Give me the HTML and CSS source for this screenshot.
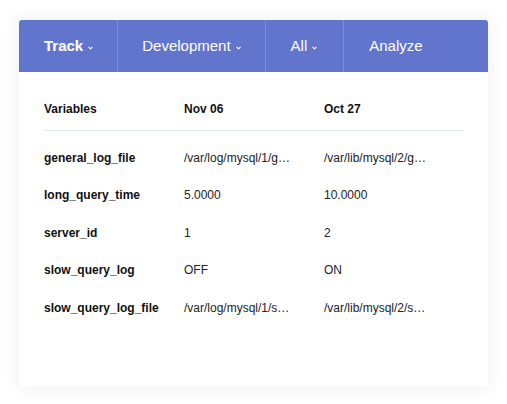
FILE: index.html
```html
<!DOCTYPE html>
<html>
<head>
<meta charset="utf-8">
<link rel="stylesheet" href="styles.css">
</head>
<body>
<div class="card">
  <nav class="nav">
    <div class="nav-item active">Track<svg class="chev" width="5" height="4" viewBox="0 0 5 4"><path d="M0.5 0.8 L2.5 2.8 L4.5 0.8" fill="none" stroke="#fff" stroke-width="1.1"/></svg></div>
    <div class="nav-item dev">Development<svg class="chev" width="5" height="4" viewBox="0 0 5 4"><path d="M0.5 0.8 L2.5 2.8 L4.5 0.8" fill="none" stroke="#fff" stroke-width="1.1"/></svg></div>
    <div class="nav-item all">All<svg class="chev" width="5" height="4" viewBox="0 0 5 4"><path d="M0.5 0.8 L2.5 2.8 L4.5 0.8" fill="none" stroke="#fff" stroke-width="1.1"/></svg></div>
    <div class="nav-item last">Analyze</div>
  </nav>
  <div class="content">
    <table class="vars">
      <thead>
        <tr><th>Variables</th><th>Nov 06</th><th>Oct 27</th></tr>
      </thead>
      <tbody>
        <tr class="first"><td class="name">general_log_file</td><td>/var/log/mysql/1/g…</td><td>/var/lib/mysql/2/g…</td></tr>
        <tr><td class="name">long_query_time</td><td>5.0000</td><td>10.0000</td></tr>
        <tr><td class="name">server_id</td><td>1</td><td>2</td></tr>
        <tr><td class="name">slow_query_log</td><td>OFF</td><td>ON</td></tr>
        <tr><td class="name">slow_query_log_file</td><td>/var/log/mysql/1/s…</td><td>/var/lib/mysql/2/s…</td></tr>
      </tbody>
    </table>
  </div>
</div>
</body>
</html>
```
FILE: styles.css
```css
html, body {
  margin: 0;
  background: #ffffff;
}
body {
  padding: 20px 19px 18px;
  font-family: "Liberation Sans", Arial, sans-serif;
}
.card {
  width: 469px;
  height: 366px;
  background: #ffffff;
  border-radius: 3px;
  box-shadow: 0 0 18px 3px rgba(0, 0, 0, 0.055);
  overflow: hidden;
}
.nav {
  display: flex;
  height: 52px;
  background: #6175cd;
  color: #ffffff;
}
.nav-item {
  display: flex;
  align-items: center;
  padding: 0 24px 2px 25px;
  font-size: 15px;
  border-right: 1px solid #7d8cd8;
}
.nav-item.active {
  font-weight: bold;
}
.nav-item.dev {
  padding-left: 24px;
}
.nav-item.all {
  padding-left: 25px;
  padding-right: 26px;
}
.nav-item.last {
  border-right: none;
}
.chev {
  margin-left: 5px;
  margin-top: 5px;
}
.content {
  padding: 14px 24px 0 25px;
}
.vars {
  width: 420px;
  border-collapse: collapse;
  table-layout: fixed;
  font-size: 12px;
  color: #222;
}
.vars th, .vars td {
  width: 140px;
  text-align: left;
  white-space: nowrap;
  overflow: hidden;
  line-height: 16px;
  padding: 0;
}
.vars th {
  font-weight: bold;
  color: #111;
  padding: 15px 0 13px;
  border-bottom: 1px solid #e2e8e8;
}
.vars td {
  padding: 10.75px 0;
}
.vars tr.first td {
  padding-top: 18.75px;
}
.vars td.name {
  font-weight: bold;
  color: #111;
}
```
